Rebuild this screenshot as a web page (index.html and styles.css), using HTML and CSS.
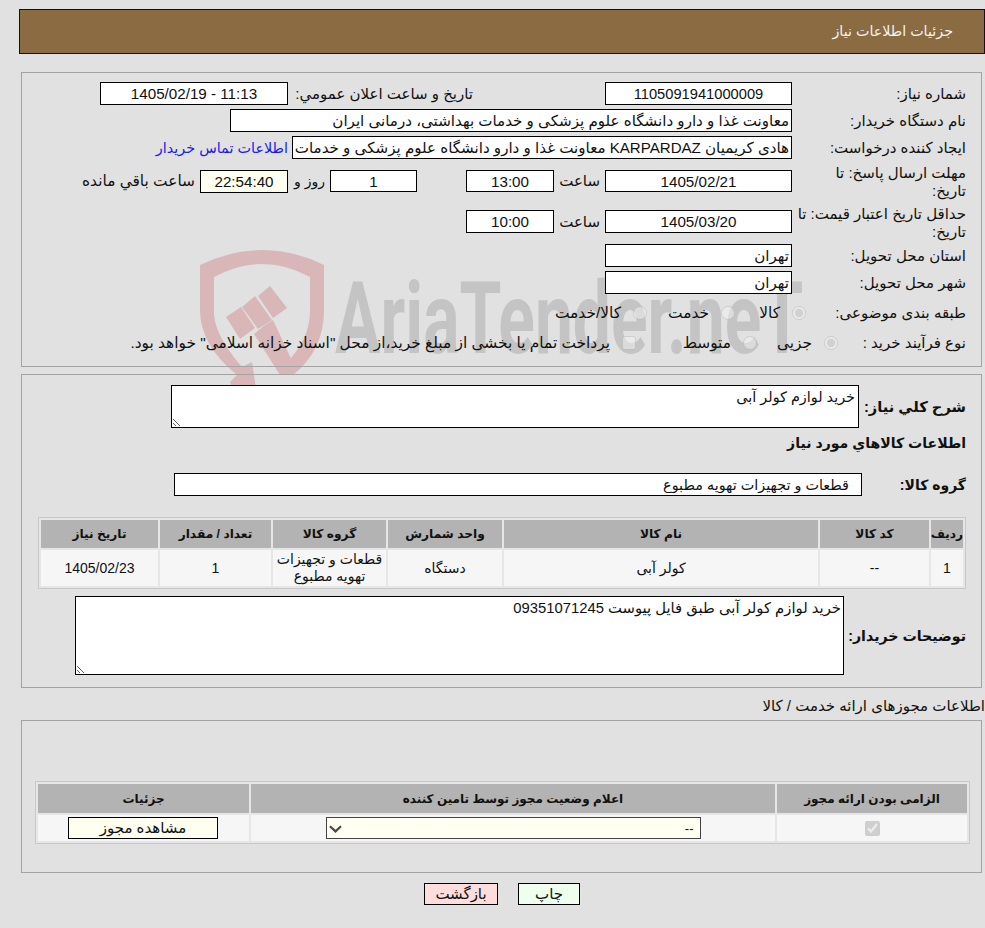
FILE: index.html
```html
<!DOCTYPE html>
<html lang="fa" dir="rtl">
<head>
    <title>جزئیات اطلاعات نیاز</title>
    <link rel="stylesheet" href="styles.css">
</head>
<body>

    <div class="watermark">
        <svg class="watermark-shield" width="150" height="150" viewBox="0 0 150 150">
            <path d="M10 20 Q42 5 72 5 Q104 5 134 20 L134 65 Q134 105 103 130 L96 118 Q120 95 120 65 L120 32 Q96 19 72 19 Q48 19 24 32 L24 70 Q26 92 52 122 L62 117 L67 150 L45 150 L40 137 L47 130 Q10 100 10 65 Z"/>
            <polygon points="36,72 51,62 65,83 50,94"/>
            <polygon points="52,62 65,51 82,75 68,84"/>
            <polygon points="68,51 80,41 97,63 83,73"/>
            <polygon points="75,80 83,75 103,118 103,130 90,130 64,89"/>
        </svg>
        <div class="watermark-text" dir="ltr">AriaTender.neT</div>
    </div>

    <div class="page">
        <div class="page-header">جزئیات اطلاعات نیاز</div>

        <div class="panel panel-main">
            <div class="row">
                <div class="label">شماره نیاز:</div>
                <input class="field field-date field-number" type="text" value="1105091941000009" readonly>
                <div class="label-inline label-announce">تاریخ و ساعت اعلان عمومي:</div>
                <input class="field field-announce" type="text" value="1405/02/19 - 11:13" dir="ltr" readonly>
            </div>
            <div class="row">
                <div class="label">نام دستگاه خریدار:</div>
                <input class="field field-text field-buyer" type="text" value="معاونت غذا و دارو دانشگاه علوم پزشکی و خدمات بهداشتی، درمانی ایران" readonly>
            </div>
            <div class="row">
                <div class="label">ایجاد کننده درخواست:</div>
                <input class="field field-text field-creator" type="text" value="هادی کریمیان KARPARDAZ معاونت غذا و دارو دانشگاه علوم پزشکی و خدمات بهداشتی، درمانی ایران" readonly>
                <a class="contact-link" href="#">اطلاعات تماس خریدار</a>
            </div>
            <div class="row row-tall">
                <div class="label label-wrap">مهلت ارسال پاسخ: تا<br>تاریخ:</div>
                <input class="field field-date field-short" type="text" value="1405/02/21" readonly>
                <div class="label-inline label-hour">ساعت</div>
                <input class="field field-time field-short" type="text" value="13:00" readonly>
                <input class="field field-days field-short" type="text" value="1" readonly>
                <div class="label-inline label-days">روز و</div>
                <input class="field field-date field-clock" type="text" value="22:54:40" readonly>
                <div class="label-inline label-left">ساعت باقي مانده</div>
            </div>
            <div class="row row-tall row-tall-second">
                <div class="label label-wrap">حداقل تاریخ اعتبار قیمت: تا<br>تاریخ:</div>
                <input class="field field-date" type="text" value="1405/03/20" readonly>
                <div class="label-inline label-hour">ساعت</div>
                <input class="field field-time" type="text" value="10:00" readonly>
            </div>
            <div class="row row-province">
                <div class="label">استان محل تحویل:</div>
                <input class="field field-text field-date" type="text" value="تهران" readonly>
            </div>
            <div class="row">
                <div class="label">شهر محل تحویل:</div>
                <input class="field field-text field-date" type="text" value="تهران" readonly>
            </div>
            <div class="row row-options row-subject">
                <div class="label label-subject">طبقه بندی موضوعی:</div>
                <label class="option option-goods"><input type="radio" name="subject" checked disabled>کالا</label>
                <label class="option option-service"><input type="radio" name="subject" disabled>خدمت</label>
                <label class="option"><input type="radio" name="subject" disabled>کالا/خدمت</label>
            </div>
            <div class="row row-options row-process">
                <div class="label label-process">نوع فرآیند خرید :</div>
                <label class="option option-small"><input type="radio" name="process" checked disabled>جزیی</label>
                <label class="option option-medium"><input type="radio" name="process" disabled>متوسط</label>
                <label class="option"><input type="checkbox" disabled>پرداخت تمام یا بخشی از مبلغ خرید،از محل "اسناد خزانه اسلامی" خواهد بود.</label>
            </div>
        </div>

        <div class="panel panel-need">
            <div class="row-form row-summary">
                <div class="label-bold label-summary">شرح کلي نیاز:</div>
                <textarea class="area area-summary" readonly>خرید لوازم کولر آبی</textarea>
            </div>
            <div class="section-title">اطلاعات کالاهاي مورد نیاز</div>
            <div class="row-form row-group">
                <div class="label-bold label-group">گروه کالا:</div>
                <input class="field field-group" type="text" value="قطعات و تجهیزات تهویه مطبوع" readonly>
            </div>
            <table class="grid grid-goods">
                <thead>
                    <tr>
                        <th class="col-index">ردیف</th>
                        <th class="col-code">کد کالا</th>
                        <th class="col-name">نام کالا</th>
                        <th class="col-unit">واحد شمارش</th>
                        <th class="col-group">گروه کالا</th>
                        <th class="col-count">تعداد / مقدار</th>
                        <th class="col-date">تاریخ نیاز</th>
                    </tr>
                </thead>
                <tbody>
                    <tr>
                        <td>1</td>
                        <td>--</td>
                        <td>کولر آبی</td>
                        <td>دستگاه</td>
                        <td>قطعات و تجهیزات تهویه مطبوع</td>
                        <td>1</td>
                        <td>1405/02/23</td>
                    </tr>
                </tbody>
            </table>
            <div class="row-form row-notes">
                <div class="label-bold label-notes">توضیحات خریدار:</div>
                <textarea class="area area-notes" readonly>خرید لوازم کولر آبی طبق فایل پیوست 09351071245</textarea>
            </div>
        </div>

        <div class="license-title">اطلاعات مجوزهای ارائه خدمت / کالا</div>

        <div class="panel panel-license">
            <table class="grid grid-license">
                <thead>
                    <tr>
                        <th class="col-required">الزامی بودن ارائه مجوز</th>
                        <th class="col-status">اعلام وضعیت مجوز توسط تامین کننده</th>
                        <th class="col-details">جزئیات</th>
                    </tr>
                </thead>
                <tbody>
                    <tr>
                        <td><input class="license-check" type="checkbox" checked disabled></td>
                        <td>
                            <div class="license-select-wrap">
                                <select class="license-select"><option>--</option></select>
                                <svg class="license-chevron" width="13" height="8" viewBox="0 0 13 8">
                                    <path d="M1 1.2 L6.5 6.4 L12 1.2" fill="none" stroke="#4A4A4A" stroke-width="2.2"/>
                                </svg>
                            </div>
                        </td>
                        <td><button class="license-button" type="button">مشاهده مجوز</button></td>
                    </tr>
                </tbody>
            </table>
        </div>

        <div class="actions">
            <button class="action-button action-print" type="button">چاپ</button>
            <button class="action-button action-back" type="button">بازگشت</button>
        </div>
    </div>

</body>
</html>
```

FILE: styles.css
```css
body {
    margin: 0;
    padding-top: 9px;
    background-color: #E1E1E1;
    color: #111;
    font-family: "Liberation Sans", "DejaVu Sans", sans-serif;
    font-size: 15px;
}

/* logo behind the first panel */
.watermark {
    position: absolute;
    top: 245px;
    left: 190px;
    width: 640px;
    height: 150px;
    overflow: hidden;
}

.watermark-shield {
    position: absolute;
    top: 0;
    left: 0;
    fill: #D9B6B8;
}

.watermark-text {
    position: absolute;
    top: 24px;
    left: 145px;
    color: #C4C4C4;
    font-family: Roboto, sans-serif;
    font-size: 100px;
    font-weight: bold;
    line-height: 100px;
    white-space: nowrap;
    transform: scaleX(0.677);
    transform-origin: left top;
}

.page {
    position: relative;
}

.page-header {
    box-sizing: border-box;
    height: 45px;
    width: 966px;
    padding-right: 31px;
    border: 1px solid #111;
    background-color: #8B6B41;
    color: #F2F2F2;
    font-size: 14.3px;
    line-height: 43px;
}

.panel {
    box-sizing: border-box;
    width: 961px;
    margin-right: 3px;
    padding-right: 15px;
    border: 1px solid #A3A3A3;
}

.panel-main {
    margin-top: 18px;
    height: 295px;
    padding-top: 9px;
}

.panel-need {
    margin-top: 7px;
    height: 314px;
    padding-top: 10px;
}

.panel-license {
    height: 153px;
    padding-top: 60px;
    padding-right: 11px;
}

.row {
    display: flex;
    align-items: center;
    height: 23px;
    margin-bottom: 4px;
}

.row-tall {
    height: 36px;
}

.row-tall-second {
    height: 35px;
    margin-top: 5px;
    margin-bottom: 5px;
}

.row-options {
    height: 20px;
    margin-bottom: 0;
}

.row-subject {
    margin-top: 9px;
}

.row-process {
    margin-top: 10px;
}

.label {
    flex: none;
    width: 174px;
    line-height: 18px;
}

.label-wrap {
    padding-top: 2px;
}

.label-subject {
    width: 160px;
}

.label-process {
    width: 128px;
}

.label-inline {
    flex: none;
    box-sizing: border-box;
    white-space: nowrap;
}

.label-announce {
    width: 317px;
    padding-right: 132px;
}

.label-hour {
    width: 51px;
    padding-right: 5px;
}

.label-days {
    width: 42px;
    padding-right: 5px;
    font-size: 14px;
}

.label-left {
    padding-right: 5px;
    font-size: 15.4px;
}

.field {
    flex: none;
    box-sizing: border-box;
    height: 23px;
    margin: 0;
    padding: 0 2px;
    border: 1px solid #000;
    border-radius: 0;
    outline: none;
    background-color: #FFF;
    color: #111;
    font-family: inherit;
    font-size: 15.2px;
    text-align: center;
}

.field-number {
    font-size: 14.7px;
}

.field-short {
    height: 22px;
}

.field-date {
    width: 187px;
}

.field-announce {
    width: 188px;
}

.field-text {
    font-size: 15.1px;
    text-align: right;
}

.field-buyer {
    width: 562px;
}

.field-creator {
    width: 500px;
}

.field-time {
    width: 88px;
}

.field-days {
    width: 87px;
    margin-right: 49px;
}

.field-clock {
    width: 88px;
    background-color: #FFFFF0;
}

.contact-link {
    margin-right: 4px;
    color: #1A1AEE;
    font-size: 14.4px;
    text-decoration: none;
    white-space: nowrap;
}

.option {
    display: flex;
    flex: none;
    align-items: center;
    font-size: 15.4px;
    white-space: nowrap;
}

.option input {
    flex: none;
    width: 14px;
    height: 14px;
    margin: 0 0 0 12px;
    opacity: 0.7;
}

.option-goods {
    width: 71px;
}

.option-service {
    width: 88px;
}

.option-small {
    width: 81px;
}

.option-medium {
    width: 121px;
}

.row-form {
    display: flex;
    align-items: center;
}

.label-bold {
    flex: none;
    font-size: 14px;
    font-weight: bold;
    white-space: nowrap;
}

.label-summary {
    width: 107px;
    font-size: 14.7px;
}

.label-group {
    width: 104px;
}

.label-notes {
    width: 122px;
    font-size: 14.2px;
}

.area {
    display: block;
    box-sizing: border-box;
    margin: 0;
    padding: 2px;
    border: 1px solid #000;
    border-radius: 0;
    outline: none;
    background-color: #FFF;
    color: #111;
    font-family: inherit;
}

.area-summary {
    width: 688px;
    height: 43px;
    padding-right: 3px;
    padding-top: 3px;
    font-size: 14.4px;
}

.area-notes {
    width: 769px;
    height: 79px;
    font-size: 14.8px;
}

.section-title {
    margin-top: 6px;
    font-size: 14.1px;
    font-weight: bold;
    line-height: 18px;
}

.row-group {
    margin-top: 21px;
}

.field-group {
    width: 688px;
    padding-right: 12px;
    font-size: 14.4px;
    text-align: right;
}

.row-notes {
    margin-top: 7px;
}

.grid {
    box-sizing: border-box;
    border: 1px solid #C8C8C8;
    border-spacing: 2px;
    background-color: #E6E6E6;
    table-layout: fixed;
}

.grid th {
    padding: 0;
    background-color: #B3B3B3;
    font-weight: bold;
}

.grid td {
    padding: 0;
    background-color: #F6F6F6;
    font-size: 14px;
    line-height: 17px;
    text-align: center;
}

.grid-goods {
    width: 928px;
    margin-top: 21px;
}

.grid-goods th {
    height: 28px;
    font-size: 12.2px;
}

.grid-goods td {
    height: 36px;
}

.col-index { width: 32px; }
.col-code { width: 109px; }
.col-name { width: 314px; }
.col-unit { width: 114px; }
.col-group { width: 113px; }
.col-count { width: 111px; }
.col-date { width: 117px; }

.license-title {
    height: 25px;
    margin-top: 7px;
    line-height: 22px;
}

.grid-license {
    width: 935px;
}

.grid-license th {
    height: 29px;
    font-size: 12px;
}

.grid-license td {
    height: 26px;
}

.col-required { width: 190px; }
.col-status { width: 524px; }
.col-details { width: 211px; }

.license-check {
    display: block;
    width: 15px;
    height: 15px;
    margin: 0 auto;
}

.license-select-wrap {
    position: relative;
    width: 375px;
    margin: 0 auto;
}

.license-select {
    display: block;
    box-sizing: border-box;
    width: 375px;
    height: 22px;
    padding: 0 6px;
    border: 1px solid #444;
    border-radius: 0;
    outline: none;
    appearance: none;
    background-color: #FFFFF2;
    color: #111;
    font-family: inherit;
    font-size: 13px;
}

.license-chevron {
    position: absolute;
    top: 8px;
    left: 3px;
}

.license-button {
    display: block;
    width: 150px;
    height: 22px;
    margin: 0 auto 0 30px;
    padding: 0;
    border: 1px solid #000;
    background-color: #FFFFF0;
    color: #111;
    font-family: inherit;
    font-size: 15px;
}

.actions {
    display: flex;
    gap: 20px;
    margin: 10px 405px 0 0;
}

.action-button {
    height: 22px;
    padding: 0;
    border: 1px solid #000;
    color: #111;
    font-family: inherit;
    font-size: 15px;
}

.action-print {
    width: 62px;
    background-color: #EFFFEF;
}

.action-back {
    width: 74px;
    background-color: #FFDDDD;
}
```
